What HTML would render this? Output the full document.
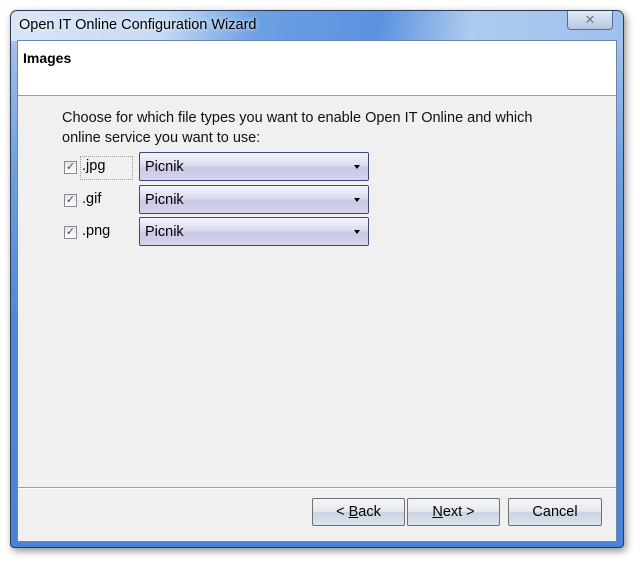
<!DOCTYPE html>
<html><head><style>
*{margin:0;padding:0;box-sizing:border-box}
body{width:640px;height:563px;background:#fff;position:relative;overflow:hidden;font-family:"Liberation Sans",sans-serif;font-size:14px;color:#000}
.win{position:absolute;left:10px;top:10px;width:614px;height:538px;border-radius:7px 7px 4px 4px;border:1px solid #2b3a55;
background:linear-gradient(180deg,#bcd3ef 0,#9cbde8 8%,#6f9edf 30%,#4d86d8 60%,#4a82d4 100%);box-shadow:2px 3px 8px rgba(0,0,0,.45)}
.glass{position:absolute;left:0;top:0;width:100%;height:30px;border-radius:7px 7px 0 0;
background:linear-gradient(100deg,#d8e6f7 0,#c6daf3 25%,#6d9fe3 40%,#5b92e0 60%,#aecbee 75%,#9ec0ec 100%)}
.title{position:absolute;left:8px;top:6px;font-size:14.5px;color:#000;text-shadow:0 0 6px #fff}
.close{position:absolute;left:556px;top:0;width:46px;height:19px;border:1px solid #5a6f8c;border-top:none;border-radius:0 0 4px 4px;background:linear-gradient(#e2ebf5,#b7c9df);color:#6a7b92;text-align:center;font-size:13px;line-height:17px}
.client{position:absolute;left:6px;top:29px;width:600px;height:502px;background:#f0f0f0;border:1px solid #6b86ad}
.hdr{position:absolute;left:0;top:0;width:100%;height:55px;background:#fff;border-bottom:1px solid #a0a0a0}
.hdr b{position:absolute;left:5px;top:9px;font-size:14px}
.txt{position:absolute;left:44px;top:67px;line-height:20px;font-size:14.5px;color:#111}
.row{position:absolute;left:46px;height:26px}
.cb{position:absolute;left:0;top:9px;width:13px;height:13px;border:1px solid #8a8a8a;background:linear-gradient(#e6e6e6,#fff);color:#2a4a8a;font-size:11px;line-height:11px;text-align:center}
.lbl{position:absolute;left:18px;top:6px;font-size:14.5px}
.focus{position:absolute;left:16px;top:4px;width:53px;height:24px;border:1px dotted #999}
.dd{position:absolute;left:75px;top:0;width:230px;height:29px;border:1px solid #3c4a7a;border-radius:2px;background:linear-gradient(#f4f4fb,#dcdcf0 45%,#c8c8e6 55%,#d4d4ec);}
.dd span{position:absolute;left:5px;top:6px;font-size:14.5px}
.dd i{position:absolute;right:8px;top:12px;border-left:3px solid transparent;border-right:3px solid transparent;border-top:4px solid #000}
.sep{position:absolute;left:0;top:446px;width:100%;border-top:1px solid #a0a0a0;border-bottom:1px solid #fff}
.btn{position:absolute;top:457px;height:28px;border:1px solid #707070;border-radius:2px;background:linear-gradient(#f4f6fa,#e4e8ef 48%,#c9d2df 52%,#dce3ec);text-align:center;line-height:26px;font-size:14.5px}
</style></head><body>
<div class="win">
<div class="glass"></div>
<div class="title">Open IT Online Configuration Wizard</div>
<div class="close">✕</div>
<div class="client">
<div class="hdr"><b>Images</b></div>
<div class="txt">Choose for which file types you want to enable Open IT Online and which<br>online service you want to use:</div>
<div class="row" style="top:111px"><div class="cb">✓</div><div class="focus"></div><div class="lbl">.jpg</div><div class="dd"><span>Picnik</span><i></i></div></div>
<div class="row" style="top:144px"><div class="cb">✓</div><div class="lbl">.gif</div><div class="dd"><span>Picnik</span><i></i></div></div>
<div class="row" style="top:176px"><div class="cb">✓</div><div class="lbl">.png</div><div class="dd"><span>Picnik</span><i></i></div></div>
<div class="sep"></div>
<div class="btn" style="left:294px;width:93px">&lt; <u>B</u>ack</div>
<div class="btn" style="left:389px;width:93px"><u>N</u>ext &gt;</div>
<div class="btn" style="left:490px;width:94px">Cancel</div>
</div>
</div>
</body></html>
